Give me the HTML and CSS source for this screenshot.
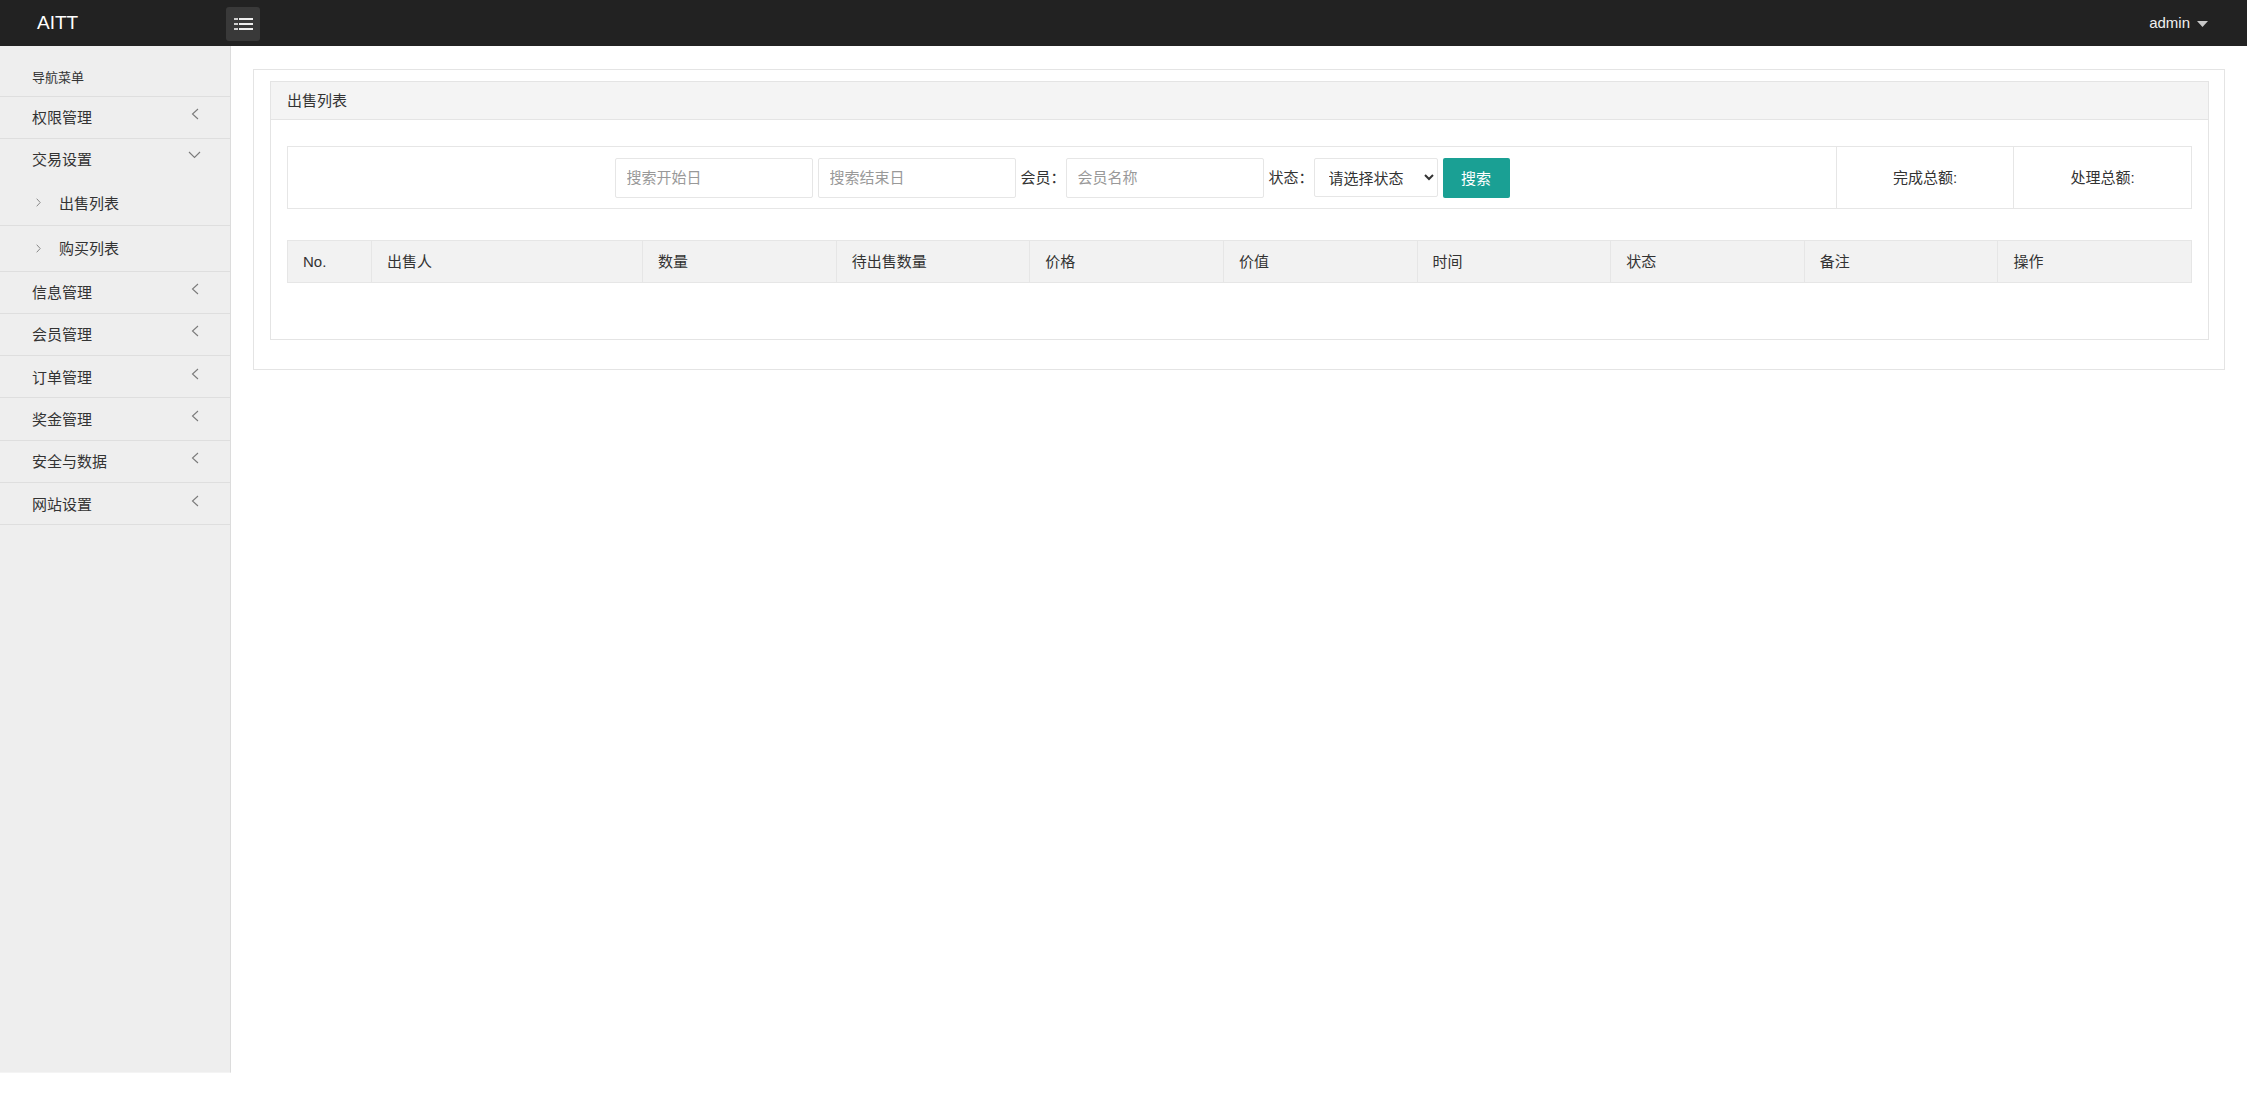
FILE: index.html
```html
<!DOCTYPE html>
<html lang="zh-CN">
<head>
<meta charset="utf-8">
<title>AITT</title>
<link rel="stylesheet" href="styles.css">
</head>
<body>
<header class="topbar">
  <div class="logo">AITT</div>
  <button class="toggle" type="button" aria-label="menu">
    <svg width="19" height="12" viewBox="0 0 19 12">
      <rect x="0" y="0" width="4" height="2" fill="#cfcfcf"/><rect x="5" y="0" width="14" height="2" fill="#eeeeee"/>
      <rect x="0" y="5" width="4" height="2" fill="#cfcfcf"/><rect x="5" y="5" width="14" height="2" fill="#eeeeee"/>
      <rect x="0" y="10" width="4" height="2" fill="#cfcfcf"/><rect x="5" y="10" width="14" height="2" fill="#eeeeee"/>
    </svg>
  </button>
  <div class="user">
    <span>admin</span>
    <svg class="caret" width="11" height="6" viewBox="0 0 11 6"><path d="M0 0H11L5.5 6Z" fill="#c8c8c8"/></svg>
  </div>
</header>
<div class="layout">
  <aside class="sidebar">
    <div class="nav-title">导航菜单</div>
    <div class="nav-item"><span>权限管理</span><svg class="chev" width="8" height="12" viewBox="0 0 8 12"><path d="M7 1L1.5 6L7 11" fill="none" stroke="#7a7a7a" stroke-width="1.1"/></svg></div>
    <div class="nav-item open"><span>交易设置</span><svg class="chev-down" width="13" height="8" viewBox="0 0 13 8"><path d="M1 1L6.5 6.5L12 1" fill="none" stroke="#7a7a7a" stroke-width="1.1"/></svg></div>
    <div class="sub-item"><svg class="chev-sm" width="5" height="9" viewBox="0 0 5 9"><path d="M0.7 0.7L4.2 4.5L0.7 8.3" fill="none" stroke="#888" stroke-width="1"/></svg><span>出售列表</span></div>
    <div class="sub-item"><svg class="chev-sm" width="5" height="9" viewBox="0 0 5 9"><path d="M0.7 0.7L4.2 4.5L0.7 8.3" fill="none" stroke="#888" stroke-width="1"/></svg><span>购买列表</span></div>
    <div class="nav-item"><span>信息管理</span><svg class="chev" width="8" height="12" viewBox="0 0 8 12"><path d="M7 1L1.5 6L7 11" fill="none" stroke="#7a7a7a" stroke-width="1.1"/></svg></div>
    <div class="nav-item"><span>会员管理</span><svg class="chev" width="8" height="12" viewBox="0 0 8 12"><path d="M7 1L1.5 6L7 11" fill="none" stroke="#7a7a7a" stroke-width="1.1"/></svg></div>
    <div class="nav-item"><span>订单管理</span><svg class="chev" width="8" height="12" viewBox="0 0 8 12"><path d="M7 1L1.5 6L7 11" fill="none" stroke="#7a7a7a" stroke-width="1.1"/></svg></div>
    <div class="nav-item"><span>奖金管理</span><svg class="chev" width="8" height="12" viewBox="0 0 8 12"><path d="M7 1L1.5 6L7 11" fill="none" stroke="#7a7a7a" stroke-width="1.1"/></svg></div>
    <div class="nav-item"><span>安全与数据</span><svg class="chev" width="8" height="12" viewBox="0 0 8 12"><path d="M7 1L1.5 6L7 11" fill="none" stroke="#7a7a7a" stroke-width="1.1"/></svg></div>
    <div class="nav-item"><span>网站设置</span><svg class="chev" width="8" height="12" viewBox="0 0 8 12"><path d="M7 1L1.5 6L7 11" fill="none" stroke="#7a7a7a" stroke-width="1.1"/></svg></div>
  </aside>
  <main class="main">
    <div class="panel-outer">
      <div class="panel">
        <div class="panel-head">出售列表</div>
        <div class="panel-body">
          <table class="search-table">
            <colgroup><col><col class="sum-col"><col class="sum-col2"></colgroup>
            <tr>
              <td>
                <form class="search-form">
                  <input class="field" type="text" placeholder="搜索开始日">
                  <input class="field gap" type="text" placeholder="搜索结束日">
                  <label class="lbl">会员：</label>
                  <input class="field" type="text" placeholder="会员名称">
                  <label class="lbl">状态：</label>
                  <select class="sel"><option>请选择状态</option></select>
                  <button class="btn" type="button">搜索</button>
                </form>
              </td>
              <td class="sum">完成总额:</td>
              <td class="sum">处理总额:</td>
            </tr>
          </table>
          <table class="data-table">
            <colgroup><col class="c-no"><col class="c-seller"><col><col><col><col><col><col><col><col></colgroup>
            <thead>
              <tr>
                <th>No.</th><th>出售人</th><th>数量</th><th>待出售数量</th><th>价格</th><th>价值</th><th>时间</th><th>状态</th><th>备注</th><th>操作</th>
              </tr>
            </thead>
          </table>
        </div>
      </div>
    </div>
  </main>
</div>
</body>
</html>
```
FILE: styles.css
```css
* { box-sizing: border-box; }
html, body { margin: 0; padding: 0; }
body {
  font-family: "Liberation Sans", "Noto Sans CJK SC", sans-serif;
  color: #333;
  background: #fff;
  font-size: 15px;
  line-height: 20px;
}
.topbar {
  height: 46px;
  background: #222;
  display: flex;
  align-items: center;
}
.logo {
  width: 226px;
  padding-left: 37px;
  font-size: 19px;
  color: #fff;
  line-height: 24px;
}
.toggle {
  width: 34px;
  height: 34px;
  margin-top: 2px;
  background: #393939;
  border: none;
  border-radius: 3px;
  padding: 0;
  display: flex;
  align-items: center;
  justify-content: center;
}
.user {
  margin-left: auto;
  padding-right: 39px;
  display: flex;
  align-items: center;
  gap: 7px;
  color: #f0f0f0;
  font-size: 15px;
}
.caret { margin-top: 1px; }
.layout {
  display: flex;
  align-items: flex-start;
}
.sidebar {
  width: 231px;
  flex: none;
  height: calc(100vh - 90px);
  background: #eeeeee;
  border-right: 1px solid #dcdcdc;
  border-bottom: 1px solid #f4f4f4;
}
.nav-title {
  padding: 22px 0 8px 32px;
  font-size: 13px;
  line-height: 20px;
  border-bottom: 1px solid #dedede;
}
.nav-item {
  height: 42.3px;
  border-bottom: 1px solid #dedede;
  display: flex;
  align-items: center;
  justify-content: space-between;
  padding: 0 31px 0 32px;
  font-size: 15px;
}
.nav-item > span, .sub-item > span { padding-top: 2px; }
.nav-item:nth-child(2) { height: 41.5px; }
.nav-item.open {
  border-bottom: none;
  height: 41.5px;
}
.chev { margin-bottom: 6px; }
.chev-down { margin-bottom: 9px; margin-right: -2px; }
.sub-item {
  height: 46px;
  border-bottom: 1px solid #dedede;
  display: flex;
  align-items: center;
  padding-left: 36px;
  font-size: 15px;
}
.sub-item + .sub-item { height: 45.5px; }
.chev-sm { margin-right: 18px; }
.main {
  flex: 1;
  padding: 23px 22px 0 22px;
}
.panel-outer {
  border: 1px solid #e4e4e4;
  padding: 11px 15px 29px 16px;
}
.panel {
  border: 1px solid #e4e4e4;
}
.panel-head {
  height: 38px;
  background: #f4f4f4;
  border-bottom: 1px solid #e4e4e4;
  display: flex;
  align-items: center;
  padding-left: 16px;
  font-size: 15px;
}
.panel-body {
  padding: 26px 16px 56px;
}
.search-table {
  width: 100%;
  border-collapse: collapse;
}
.search-table td {
  border: 1px solid #e6e6e6;
  height: 62px;
  padding: 0;
}
.sum-col { width: 177px; }
.sum-col2 { width: 178px; }
.search-table td.sum {
  text-align: center;
  font-size: 15px;
}
.search-form {
  margin: 0;
  display: flex;
  justify-content: center;
  align-items: center;
}
.field {
  width: 198px;
  height: 40px;
  border: 1px solid #e6e6e6;
  border-radius: 2px;
  padding: 0 11px;
  font-family: inherit;
  font-size: 15px;
  color: #333;
  outline: none;
}
.field::placeholder { color: #999; }
.field.gap { margin-left: 5px; }
.lbl {
  margin-left: 5px;
  font-size: 15px;
  width: 45px;
  flex: none;
  white-space: nowrap;
}
.sel {
  width: 124px;
  height: 39px;
  border: 1px solid #e6e6e6;
  border-radius: 2px;
  background: #fff;
  font-family: inherit;
  font-size: 15px;
  color: #333;
  padding: 2px 4px 0 10px;
}
.btn {
  width: 67px;
  height: 40px;
  margin-left: 5px;
  background: #1aa094;
  border: none;
  border-radius: 2px;
  color: #fff;
  font-family: inherit;
  font-size: 15px;
}
.data-table {
  width: 100%;
  margin-top: 31px;
  border-collapse: collapse;
  table-layout: fixed;
}
.c-no { width: 84px; }
.c-seller { width: 271px; }
.data-table th {
  height: 42px;
  padding: 0 15px;
  background: #f2f2f2;
  border: 1px solid #e6e6e6;
  text-align: left;
  font-weight: normal;
  font-size: 15px;
  color: #333;
}
```
